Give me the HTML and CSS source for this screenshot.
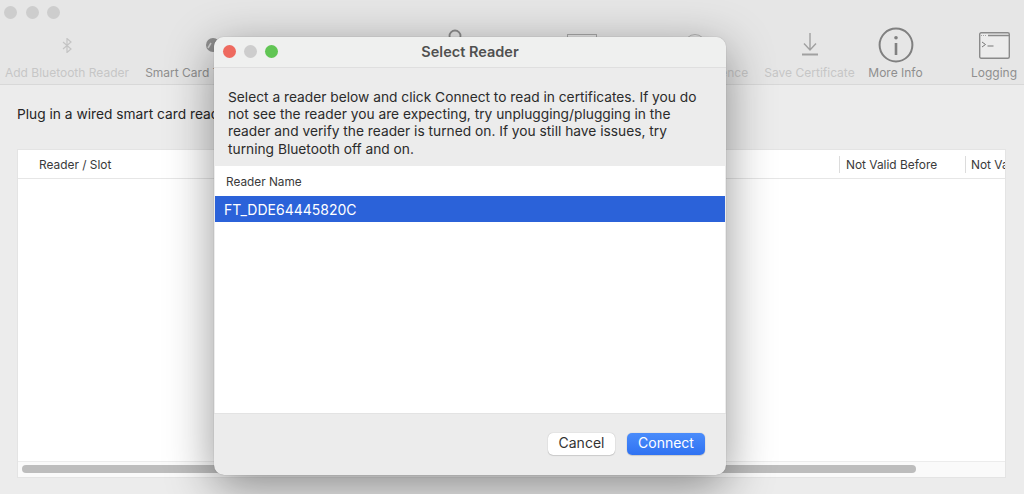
FILE: index.html
```html
<!DOCTYPE html>
<html lang="en">
<head>
<meta charset="utf-8">
<title>Select Reader</title>
<link rel="stylesheet" href="styles.css">
</head>
<body>
<div class="window">
  <header class="toolbar">
    <div class="lights">
      <span class="light"></span><span class="light"></span><span class="light"></span>
    </div>
    <div class="tools">
      <div class="tool tool-bt off">
        <div class="icon"><svg width="10" height="15" viewBox="0 0 10 15"><path d="M1 4l8 7-4 3.500V0.500L9 4l-8 7" fill="none" stroke="#c4c4c4" stroke-width="1.200"/></svg></div>
        <span class="label">Add Bluetooth Reader</span>
      </div>
      <div class="tool tool-sc">
        <div class="icon"><svg width="24" height="24" viewBox="0 0 24 24"><circle cx="12" cy="12" r="7" fill="#8f8f8f"/><path d="M7 15l3-5" stroke="#d0d0d0" stroke-width="1.500"/></svg></div>
        <span class="label">Smart Card Token Tools</span>
      </div>
      <div class="tool tool-lock">
        <div class="icon"><svg width="24" height="36" viewBox="0 0 24 36"><circle cx="12" cy="9" r="5.500" fill="none" stroke="#8b8b8b" stroke-width="1.800"/></svg></div>
        <span class="label">Certificate</span>
      </div>
      <div class="tool tool-view">
        <div class="icon"><svg width="30" height="36" viewBox="0 0 30 36"><rect x="0.500" y="7.500" width="29" height="22" fill="none" stroke="#a8a8a8"/></svg></div>
        <span class="label">View</span>
      </div>
      <div class="tool tool-pref off">
        <div class="icon"><svg width="24" height="24" viewBox="0 0 24 24"><circle cx="12" cy="12" r="10.500" fill="none" stroke="#b5b5b5"/></svg></div>
        <span class="label">Default Preference</span>
      </div>
      <div class="tool tool-save off">
        <div class="icon"><svg width="16" height="24" viewBox="0 0 16 24"><path d="M8 0v17M2 10.500l6 6.500 6-6.500" fill="none" stroke="#a0a0a0" stroke-width="1.400"/><path d="M0 21.500h16" stroke="#a0a0a0" stroke-width="2"/></svg></div>
        <span class="label">Save Certificate</span>
      </div>
      <div class="tool tool-info">
        <div class="icon"><svg width="36" height="36" viewBox="0 0 36 36"><circle cx="18" cy="18" r="16.400" fill="none" stroke="#808080" stroke-width="2"/><circle cx="18" cy="10.700" r="1.800" fill="#808080"/><path d="M18 16v12" stroke="#808080" stroke-width="2.600"/></svg></div>
        <span class="label">More Info</span>
      </div>
      <div class="tool tool-log">
        <div class="icon"><svg width="31" height="27" viewBox="0 0 31 27"><rect x="0.700" y="0.700" width="29.600" height="25.600" rx="1.500" fill="#ececec" stroke="#8a8a8a" stroke-width="1.400"/><path d="M9 3.500h21" stroke="#8a8a8a" stroke-width="1.500"/><path d="M2 3.500h6" stroke="#a5a5a5" stroke-width="1.200" stroke-dasharray="1 1"/><path d="M3 10l3.500 2.500L3 15" fill="none" stroke="#777"/><path d="M8.500 14h6" stroke="#777"/></svg></div>
        <span class="label">Logging</span>
      </div>
    </div>
  </header>
  <main class="content">
    <p class="hint">Plug in a wired smart card reader</p>
    <section class="table">
      <div class="thead">
        <span class="th th-reader">Reader / Slot</span>
        <span class="th th-before">Not Valid Before</span>
        <span class="th th-after">Not Valid After</span>
      </div>
      <div class="tbody"></div>
      <div class="scrollbar"><div class="thumb"></div></div>
    </section>
  </main>
</div>

<div class="dialog">
  <div class="titlebar">
    <div class="lights lights-dialog">
      <span class="light red"></span><span class="light"></span><span class="light green"></span>
    </div>
    <h1 class="title">Select Reader</h1>
  </div>
  <p class="message">Select a reader below and click Connect to read in certificates. If you do not see the reader you are expecting, try unplugging/plugging in the reader and verify the reader is turned on. If you still have issues, try turning Bluetooth off and on.</p>
  <div class="list">
    <div class="list-head">Reader Name</div>
    <div class="list-row">FT_DDE64445820C</div>
  </div>
  <div class="footer">
    <button class="btn">Cancel</button>
    <button class="btn primary">Connect</button>
  </div>
</div>
</body>
</html>
```
FILE: styles.css
```css
* { box-sizing: border-box; }
html, body { margin: 0; height: 100%; }
body {
  width: 1024px;
  height: 494px;
  overflow: hidden;
  background: #ececec;
  color: #2a2a2a;
  font-family: Inter, "Liberation Sans", sans-serif;
  position: relative;
}
.window { display: flex; flex-direction: column; height: 494px; }
.toolbar {
  height: 85px;
  background: #e6e6e6;
  border-bottom: 1px solid #d8d8d8;
  padding: 6px 0 0;
  flex: none;
}
.lights { display: flex; gap: 8.500px; padding-left: 4px; }
.light { width: 13px; height: 13px; border-radius: 50%; background: #cdcdcd; }
.tools { display: flex; padding-top: 8px; }
.tool {
  display: flex;
  flex-direction: column;
  align-items: center;
  flex: none;
}
.icon { height: 36px; display: flex; align-items: center; justify-content: center; margin-bottom: 3px; }
.label { font-size: 12px; line-height: 14px; color: #8f8f8f; white-space: nowrap; }
.off .label { color: #c6c6c6; }
.tool-bt { width: 134px; }
.tool-sc { width: 158px; }
.tool-lock { width: 100px; margin-left: 113px; }
.tool-view { width: 100px; margin-left: 27px; }
.tool-pref { width: 116px; margin-left: 5px; }
.tool-save { width: 90px; margin-left: 11.500px; }
.tool-info { width: 82px; }
.tool-log { width: 58px; margin-left: 28.500px; }
.content { flex: 1; padding: 20px 18px 16px 17px; display: flex; flex-direction: column; min-height: 0; }
.hint { margin: 0 0 26px; font-size: 13.750px; line-height: 18px; white-space: nowrap; color: #262626; }
.table {
  flex: 1;
  min-height: 0;
  width: 989px;
  background: #fff;
  border: 1px solid #e4e4e4;
  display: flex;
  flex-direction: column;
}
.thead {
  height: 29px;
  border-bottom: 1px solid #e6e6e6;
  display: flex;
  align-items: center;
  overflow: hidden;
  flex: none;
  font-size: 11.900px;
  color: #3a3a3a;
}
.th { white-space: nowrap; flex: none; }
.th-reader { padding-left: 21px; width: 821px; }
.th-before { border-left: 1px solid #dcdcdc; padding-left: 6px; width: 126px; line-height: 17px; }
.th-after { border-left: 1px solid #dcdcdc; padding-left: 5px; line-height: 17px; }
.tbody { flex: 1; }
.scrollbar { height: 16px; border-top: 1px solid #ececec; padding: 3px 4px; flex: none; background: #fafafa; }
.thumb { width: 894px; height: 8px; border-radius: 4px; background: #bdbdbd; }
.dialog {
  position: absolute;
  left: 214px;
  top: 37px;
  width: 512px;
  height: 438px;
  background: #ececec;
  border-radius: 10px;
  box-shadow: 0 0 1px rgba(0,0,0,.35), 0 12px 48px rgba(0,0,0,.42);
  display: flex;
  flex-direction: column;
  overflow: hidden;
}
.titlebar {
  height: 31px;
  background: #eff0ef;
  border-bottom: 1px solid #dfdfdf;
  display: flex;
  align-items: center;
  justify-content: center;
  position: relative;
  flex: none;
}
.lights-dialog { position: absolute; left: 9px; top: 8px; padding: 0; gap: 8px; }
.red { background: #ee6a5f; }
.green { background: #61c554; }
.title { margin: 0 0 2px; font-size: 14.500px; font-weight: 600; color: #505050; }
.message {
  margin: 0;
  padding: 21px 28px 0 14px;
  height: 98px;
  font-size: 13.750px;
  line-height: 17.200px;
  color: #2b2b2b;
  flex: none;
}
.list { flex: 1; background: #fff; margin: 0 1px; display: flex; flex-direction: column; }
.list-head { height: 30px; line-height: 32px; padding-left: 11px; font-size: 11.800px; color: #3a3a3a; flex: none; }
.list-row {
  height: 26px;
  background: #2b62d9;
  color: #fff;
  font-size: 14px;
  line-height: 27px;
  padding-left: 9px;
  flex: none;
}
.footer {
  height: 62px;
  flex: none;
  display: flex;
  justify-content: flex-end;
  align-items: flex-start;
  gap: 12px;
  padding: 19px 21px 0 0;
  border-top: 1px solid #e3e3e3;
}
.btn {
  height: 21.500px;
  width: 67px;
  border: 0;
  border-radius: 5px;
  background: #fff;
  box-shadow: 0 0 1px rgba(0,0,0,.3), 0 1px 1px rgba(0,0,0,.12);
  font: 14px Inter, "Liberation Sans", sans-serif;
  color: #333;
  padding: 0 0 2px;
}
.primary { width: 78px; background: linear-gradient(#4a8cfb, #2f72f2); color: #fff; }
```
